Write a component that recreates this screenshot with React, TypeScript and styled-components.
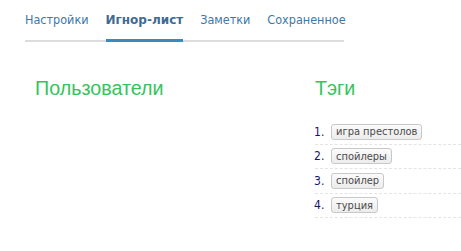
import React from 'react'
import styled, { createGlobalStyle } from 'styled-components'

const GlobalStyle = createGlobalStyle`
  body {
    margin: 0;
    background: #fff;
    font-family: "DejaVu Sans Condensed", "DejaVu Sans", Tahoma, sans-serif;
  }
`

const Page = styled.div`
  width: 461px;
  height: 251px;
  overflow: hidden;
`

const TabBar = styled.nav`
  display: flex;
  gap: 17px;
  margin: 0 0 0 25px;
  width: 319px;
  height: 42px;
  border-bottom: 2px solid #dcdcdc;
  box-sizing: border-box;
`

const Tab = styled.a<{ $active?: boolean }>`
  display: flex;
  align-items: center;
  height: 42px;
  font-family: ${(p) =>
    p.$active ? '"DejaVu Sans", Verdana, sans-serif' : 'inherit'};
  font-size: ${(p) => (p.$active ? '12px' : '12.5px')};
  font-weight: ${(p) => (p.$active ? 'bold' : 'normal')};
  color: ${(p) => (p.$active ? '#3f6a92' : '#3b78a8')};
  text-decoration: none;
  box-sizing: border-box;
  border-bottom: 3px solid ${(p) => (p.$active ? '#3a8bbd' : 'transparent')};
  margin-bottom: -2px;
  white-space: nowrap;
`

const Columns = styled.div`
  display: flex;
  padding-top: 34px;
`

const Column = styled.section<{ $width?: number; $indent: number }>`
  width: ${(p) => (p.$width ? `${p.$width}px` : 'auto')};
  flex: ${(p) => (p.$width ? 'none' : '1')};
  padding-left: ${(p) => p.$indent}px;
  box-sizing: border-box;
`

const Heading = styled.h2`
  margin: 0;
  font-family: "Liberation Sans", Arial, sans-serif;
  font-weight: normal;
  font-size: 19.7px;
  line-height: 24px;
  color: #36c35c;
`

const TagList = styled.ol`
  margin: 20px 0 0;
  padding: 0;
  list-style: none;
  counter-reset: tag;
`

const TagRow = styled.li`
  counter-increment: tag;
  display: flex;
  align-items: center;
  height: 24.5px;
  border-bottom: 1px dashed #e4e4e4;
  box-sizing: border-box;
  font-size: 12px;

  &::before {
    content: counter(tag) '.';
    width: 17px;
    margin-left: -1px;
    color: #15136a;
  }
`

const TagButton = styled.span`
  display: inline-flex;
  align-items: center;
  height: 16px;
  padding: 0 4px;
  border: 1px solid #c8c8c8;
  border-radius: 3px;
  background: linear-gradient(#fbfbfb, #ececec);
  color: #4a4a4a;
  font-size: 11px;
  box-sizing: border-box;
`

const tabs = ['Настройки', 'Игнор-лист', 'Заметки', 'Сохраненное']
const tags = ['игра престолов', 'спойлеры', 'спойлер', 'турция']

export default function App() {
  return (
    <Page>
      <GlobalStyle />
      <TabBar>
        {tabs.map((t) => (
          <Tab key={t} $active={t === 'Игнор-лист'}>
            {t}
          </Tab>
        ))}
      </TabBar>
      <Columns>
        <Column $width={280} $indent={35}>
          <Heading>Пользователи</Heading>
        </Column>
        <Column $indent={35}>
          <Heading>Тэги</Heading>
          <TagList>
            {tags.map((t) => (
              <TagRow key={t}>
                <TagButton>{t}</TagButton>
              </TagRow>
            ))}
          </TagList>
        </Column>
      </Columns>
    </Page>
  )
}
